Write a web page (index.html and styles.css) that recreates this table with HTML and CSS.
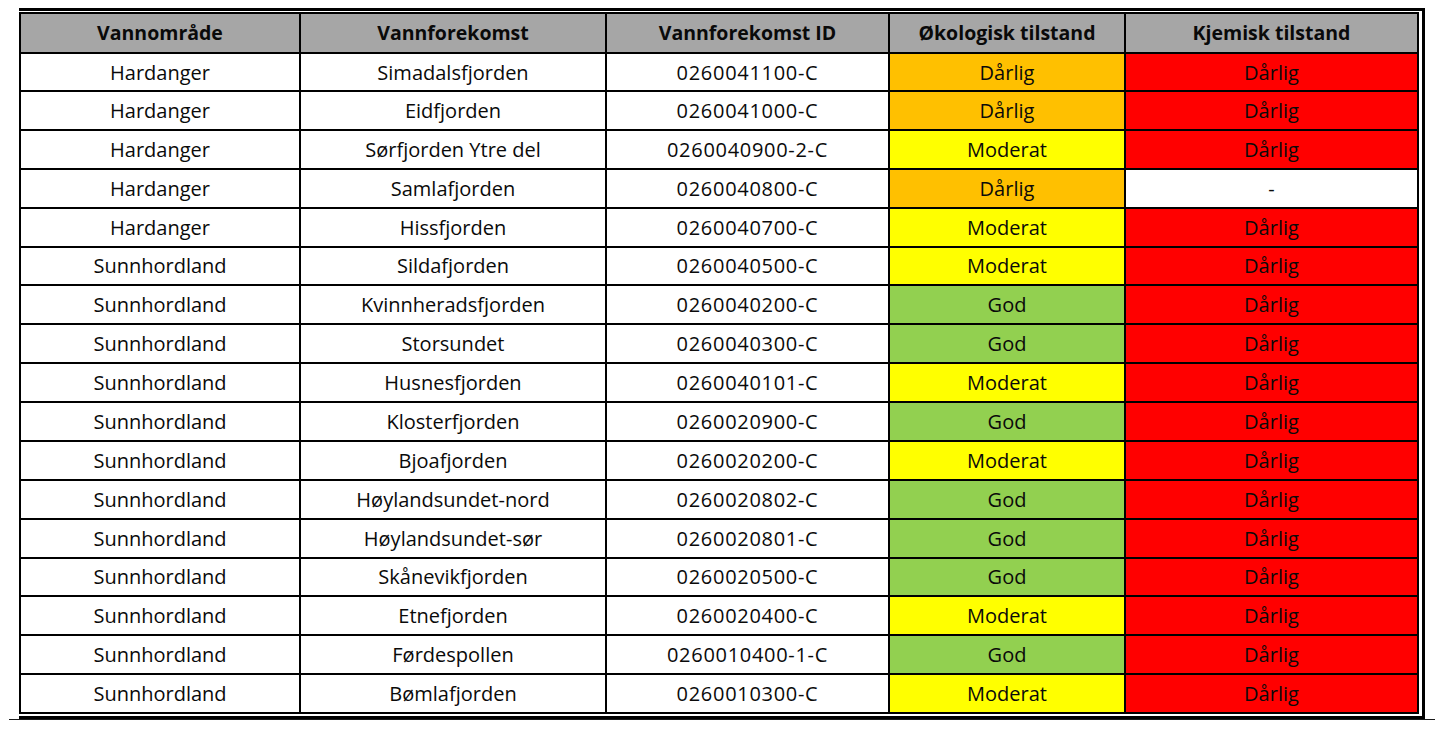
FILE: index.html
```html
<!DOCTYPE html>
<html lang="no">
<head>
<meta charset="utf-8">
<title>Tilstand vannforekomster</title>
<link rel="stylesheet" href="styles.css">
</head>
<body>
<div class="sheet">
  <table class="status">
    <colgroup>
      <col class="c1"><col class="c2"><col class="c3"><col class="c4"><col class="c5">
    </colgroup>
    <thead>
      <tr class="head">
        <th>Vannområde</th><th>Vannforekomst</th><th>Vannforekomst ID</th><th>Økologisk tilstand</th><th>Kjemisk tilstand</th>
      </tr>
    </thead>
    <tbody>
      <tr class="first"><td>Hardanger</td><td>Simadalsfjorden</td><td class="id">0260041100-C</td><td class="orange">Dårlig</td><td class="red">Dårlig</td></tr>
      <tr><td>Hardanger</td><td>Eidfjorden</td><td class="id">0260041000-C</td><td class="orange">Dårlig</td><td class="red">Dårlig</td></tr>
      <tr><td>Hardanger</td><td>Sørfjorden Ytre del</td><td class="id">0260040900-2-C</td><td class="yellow">Moderat</td><td class="red">Dårlig</td></tr>
      <tr><td>Hardanger</td><td>Samlafjorden</td><td class="id">0260040800-C</td><td class="orange">Dårlig</td><td>-</td></tr>
      <tr><td>Hardanger</td><td>Hissfjorden</td><td class="id">0260040700-C</td><td class="yellow">Moderat</td><td class="red">Dårlig</td></tr>
      <tr><td>Sunnhordland</td><td>Sildafjorden</td><td class="id">0260040500-C</td><td class="yellow">Moderat</td><td class="red">Dårlig</td></tr>
      <tr><td>Sunnhordland</td><td>Kvinnheradsfjorden</td><td class="id">0260040200-C</td><td class="green">God</td><td class="red">Dårlig</td></tr>
      <tr><td>Sunnhordland</td><td>Storsundet</td><td class="id">0260040300-C</td><td class="green">God</td><td class="red">Dårlig</td></tr>
      <tr><td>Sunnhordland</td><td>Husnesfjorden</td><td class="id">0260040101-C</td><td class="yellow">Moderat</td><td class="red">Dårlig</td></tr>
      <tr><td>Sunnhordland</td><td>Klosterfjorden</td><td class="id">0260020900-C</td><td class="green">God</td><td class="red">Dårlig</td></tr>
      <tr><td>Sunnhordland</td><td>Bjoafjorden</td><td class="id">0260020200-C</td><td class="yellow">Moderat</td><td class="red">Dårlig</td></tr>
      <tr><td>Sunnhordland</td><td>Høylandsundet-nord</td><td class="id">0260020802-C</td><td class="green">God</td><td class="red">Dårlig</td></tr>
      <tr><td>Sunnhordland</td><td>Høylandsundet-sør</td><td class="id">0260020801-C</td><td class="green">God</td><td class="red">Dårlig</td></tr>
      <tr><td>Sunnhordland</td><td>Skånevikfjorden</td><td class="id">0260020500-C</td><td class="green">God</td><td class="red">Dårlig</td></tr>
      <tr><td>Sunnhordland</td><td>Etnefjorden</td><td class="id">0260020400-C</td><td class="yellow">Moderat</td><td class="red">Dårlig</td></tr>
      <tr><td>Sunnhordland</td><td>Førdespollen</td><td class="id">0260010400-1-C</td><td class="green">God</td><td class="red">Dårlig</td></tr>
      <tr><td>Sunnhordland</td><td>Bømlafjorden</td><td class="id">0260010300-C</td><td class="yellow">Moderat</td><td class="red">Dårlig</td></tr>
    </tbody>
  </table>
</div>
<div class="rule"></div>
</body>
</html>
```

FILE: styles.css
```css
html, body {
  margin: 0;
  padding: 0;
  background: #ffffff;
}

body {
  font-family: "Open Sans", "Liberation Sans", sans-serif;
  color: #0a0a0a;
}

.sheet {
  box-sizing: border-box;
  width: 1406px;
  margin: 8px 0 0 19px;
  border-top: 3px solid #000;
  border-right: 3px solid #000;
  border-bottom: 3px solid #000;
  padding: 1px 2px 2px 0;
}

.status {
  width: 1400px;
  table-layout: fixed;
  border-collapse: separate;
  border-spacing: 2px;
  background: #000;
  font-size: 20px;
}

.c1 { width: 278px; }
.c2 { width: 304px; }
.c3 { width: 281px; }
.c4 { width: 234px; }
.c5 { width: 291px; }

.status th,
.status td {
  padding: 0;
  text-align: center;
  vertical-align: middle;
  background: #ffffff;
  white-space: nowrap;
  line-height: 1;
}

.status th {
  background: #a6a6a6;
  font-weight: 700;
  font-size: 19.5px;
  height: 38px;
}

.status td {
  height: 35.875px;
  padding-top: 1px;
}

.status tr.first td {
  height: 35px;
}

.status td.id {
  letter-spacing: 0.7px;
}

.status td.orange { background: #ffc000; }
.status td.red { background: #ff0000; }
.status td.yellow { background: #ffff00; }
.status td.green { background: #92d050; }

.rule {
  width: 1426px;
  height: 1px;
  margin-left: 9px;
  background: #1a1a1a;
}
```
